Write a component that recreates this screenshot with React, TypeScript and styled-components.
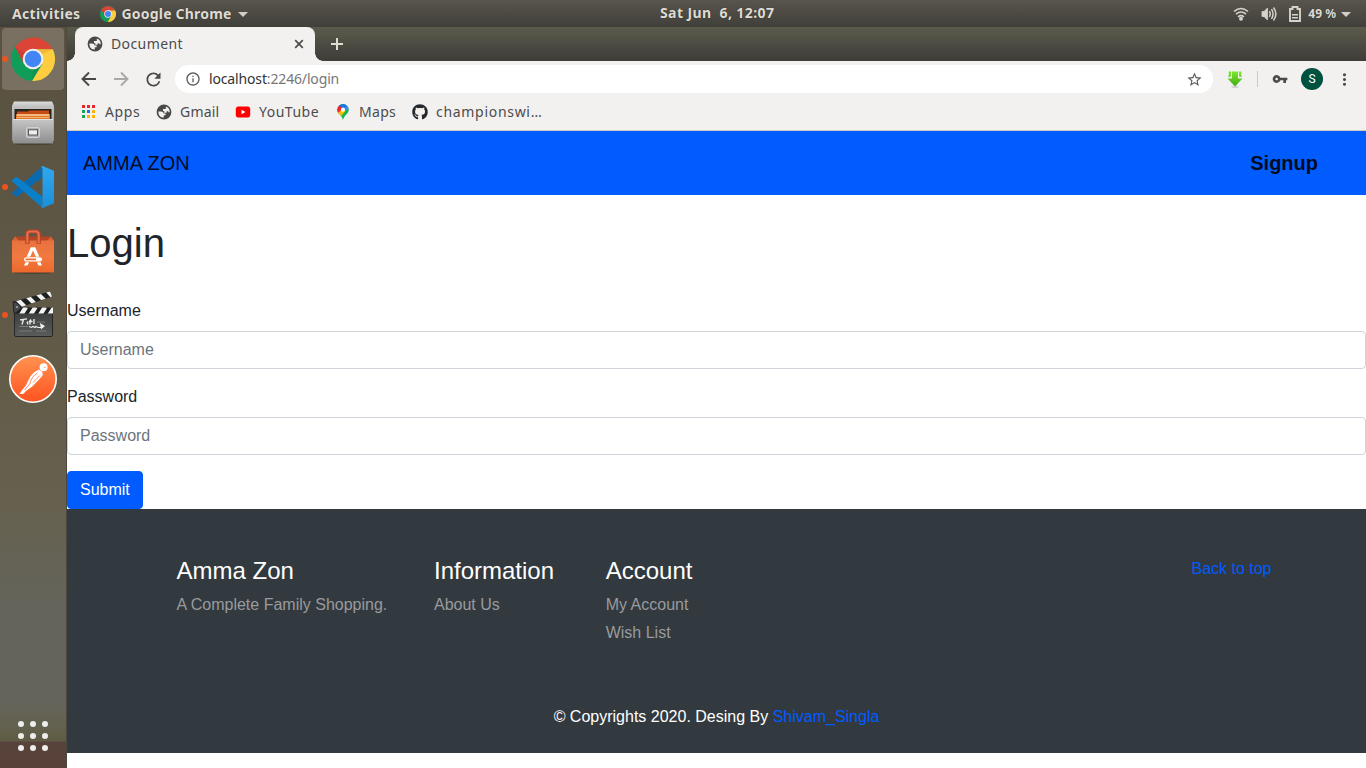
import React from "react";
import styled, { createGlobalStyle } from "styled-components";
import { MdRefresh, MdInfoOutline, MdStarBorder, MdVpnKey, MdMoreVert } from "react-icons/md";
import { FaGithub } from "react-icons/fa";

const Global = createGlobalStyle`
  * { box-sizing: border-box; }
  body { margin: 0; background: #fff; overflow: hidden; font-family: "Liberation Sans", Arial, sans-serif; }
`;

const Desktop = styled.div`
  width: 1366px;
  height: 768px;
  display: flex;
  flex-direction: column;
  overflow: hidden;
`;

const TopBar = styled.header`
  height: 27px;
  flex: none;
  display: grid;
  grid-template-columns: 648px 1fr 1fr;
  align-items: center;
  padding: 0 15px 0 12px;
  background: linear-gradient(#58554d, #413f3a);
  color: #dfdbd2;
  font: 700 14px "Noto Sans", "Open Sans", sans-serif;
  text-shadow: 0 0 1px #222;
`;

const BarGroup = styled.div<{ $end?: boolean }>`
  display: flex;
  align-items: center;
  justify-content: ${(p) => (p.$end ? "flex-end" : "flex-start")};
  svg { flex: none; }
`;

const BarText = styled.span<{ $size?: number; $spacing?: number; $left?: number }>`
  font-size: ${(p) => p.$size ?? 14}px;
  letter-spacing: ${(p) => p.$spacing ?? 0}px;
  margin-left: ${(p) => p.$left ?? 0}px;
  line-height: 26px;
  white-space: pre;
`;

const Clock = styled(BarText)`
  padding-bottom: 2px;
`;

const AppMenu = styled(BarGroup)`
  margin-left: 19px;
`;

const StatusIcons = styled(BarGroup)`
  gap: 12px;
  margin-right: 1px;
`;

const Caret = styled.i<{ $left: number }>`
  margin-left: ${(p) => p.$left}px;
  border: 5px solid transparent;
  border-top-color: #d3cfc6;
  border-bottom: 0;
`;

const Workspace = styled.div`
  flex: 1;
  min-height: 0;
  display: flex;
`;

const Dock = styled.nav`
  width: 67px;
  flex: none;
  display: flex;
  flex-direction: column;
  align-items: center;
  padding: 0 1px 17px 1px;
  border-right: 1px solid #4b493f;
  background: linear-gradient(#5a523f 0, #5c5443 120px, #625b48 340px, #66614f 480px, #64645a 570px, #64645a 680px, #62604b 705px, #5f5b44 714px, #57433b 715px, #594139 741px);
`;

const DockItem = styled.div<{ $active?: boolean; $running?: boolean }>`
  position: relative;
  width: 62px;
  height: ${(p) => (p.$active ? 62 : 64)}px;
  margin: ${(p) => (p.$active ? "1px 0" : "0")};
  display: flex;
  align-items: center;
  justify-content: center;
  border-radius: 4px;
  background: ${(p) => (p.$active ? "#797062" : "transparent")};
  &::before {
    content: "";
    display: ${(p) => (p.$running ? "block" : "none")};
    position: absolute;
    left: 0;
    top: 50%;
    width: 6px;
    height: 6px;
    margin-top: -3px;
    border-radius: 50%;
    background: #e95420;
  }
`;

const AppGrid = styled.div`
  margin-top: auto;
  display: grid;
  grid-template-columns: repeat(3, 6px);
  gap: 6px;
  i { width: 6px; height: 6px; border-radius: 50%; background: #eeeeec; }
`;

const Browser = styled.main`
  flex: 1;
  min-width: 0;
  display: flex;
  flex-direction: column;
  background: #fff;
`;

const TabStrip = styled.div`
  height: 34px;
  flex: none;
  display: flex;
  align-items: center;
  padding-left: 8px;
  background: linear-gradient(#5b5b4c, #3e3c38);
`;

const Tab = styled.div`
  position: relative;
  width: 240px;
  height: 34px;
  display: flex;
  align-items: center;
  padding: 0 9px 0 12px;
  border-radius: 8px 8px 0 0;
  background: #f2f1f0;
  color: #4c4c4c;
  margin-right: 13px;
  &::before, &::after {
    content: "";
    position: absolute;
    bottom: 0;
    width: 8px;
    height: 8px;
  }
  &::before { left: -8px; background: radial-gradient(circle at 0 0, transparent 7.5px, #f2f1f0 8px); }
  &::after { right: -8px; background: radial-gradient(circle at 100% 0, transparent 7.5px, #f2f1f0 8px); }
`;

const ChromeText = styled.span<{ $spacing?: number }>`
  font: 14px/20px "Noto Sans", "Open Sans", sans-serif;
  letter-spacing: ${(p) => p.$spacing ?? 0}px;
  color: #4c4c4c;
  white-space: nowrap;
`;

const TabTitle = styled(ChromeText)`
  margin-left: 8px;
  flex: 1;
`;

const Toolbar = styled.div`
  height: 36px;
  flex: none;
  display: flex;
  align-items: center;
  padding: 0 11px 0 12px;
  background: #f2f1f0;
  color: #4a4a4a;
`;

const NavIcons = styled.div`
  display: flex;
  gap: 12px;
  width: 96px;
  flex: none;
`;

const AddressBar = styled.div`
  flex: 1;
  height: 28px;
  display: flex;
  align-items: center;
  padding: 0 10px;
  border-radius: 14px;
  background: #fff;
  color: #5c5c5c;
`;

const Url = styled(ChromeText)`
  flex: 1;
  margin-left: 8px;
  color: #777;
  b { font-weight: 400; color: #333; }
`;

const Extensions = styled.div`
  display: flex;
  align-items: center;
  width: 142px;
  padding-left: 14px;
  svg { flex: none; }
`;

const Divider = styled.i`
  width: 1px;
  height: 16px;
  margin: 0 14px 0 14px;
  background: #cacac9;
`;

const Avatar = styled.span`
  width: 22px;
  height: 22px;
  flex: none;
  margin: 0 12px 0 13px;
  border-radius: 50%;
  background: #00513f;
  color: #fff;
  text-align: center;
  font: 12px/22px Roboto, sans-serif;
`;

const Bookmarks = styled.div`
  height: 34px;
  flex: none;
  display: flex;
  align-items: center;
  padding: 0 0 4px 14px;
  background: #f2f1f0;
  border-bottom: 1px solid #cfcac3;
`;

const Bookmark = styled.div<{ $width: number; $gap?: number }>`
  width: ${(p) => p.$width}px;
  display: flex;
  align-items: center;
  gap: ${(p) => p.$gap ?? 8}px;
  color: #4c4c4c;
  svg { flex: none; }
`;

const SiteNav = styled.nav`
  height: 64px;
  flex: none;
  display: flex;
  align-items: center;
  justify-content: space-between;
  padding: 0 48px 0 16px;
  background: #005cff;
  color: rgba(0, 0, 0, 0.9);
  font-size: 20px;
  line-height: 30px;
`;

const Form = styled.form`
  padding-top: 24px;
  color: #212529;
  font-size: 16px;
  line-height: 24px;
`;

const Heading = styled.h1`
  margin: 0 0 32px;
  font-size: 40px;
  font-weight: 400;
  line-height: 48px;
`;

const Field = styled.label`
  display: flex;
  flex-direction: column;
  gap: 8px;
  margin-bottom: 16px;
`;

const Input = styled.input`
  height: 38px;
  width: 100%;
  padding: 6px 12px;
  border: 1px solid #ced4da;
  border-radius: 4px;
  font: 16px/24px "Liberation Sans", Arial, sans-serif;
  &::placeholder { color: #6c757d; opacity: 1; }
`;

const Submit = styled.button`
  display: block;
  height: 38px;
  padding: 6px 12px;
  border: 1px solid #005cff;
  border-radius: 4px;
  background: #005cff;
  color: #fff;
  font: 16px/24px "Liberation Sans", Arial, sans-serif;
`;

const Footer = styled.footer`
  height: 244px;
  flex: none;
  display: flex;
  flex-direction: column;
  justify-content: space-between;
  padding: 48px 94.5px 24px 109.5px;
  background: #32393f;
  color: #fff;
  font-size: 16px;
  line-height: 24px;
`;

const FooterColumns = styled.div`
  display: grid;
  grid-template-columns: 257.5px 171.7px 1fr auto;
`;

const ColumnTitle = styled.h4`
  margin: 0 0 7px;
  font-size: 24px;
  font-weight: 400;
  line-height: 28.8px;
`;

const MutedLine = styled.div`
  margin-bottom: 4px;
  color: #999b9d;
`;

const Link = styled.a`
  color: #005cff;
`;

const Copyright = styled.p`
  margin: 0 -94.5px 0 -109.5px;
  text-align: center;
`;

function ChromeLogo({ size }: { size: number }) {
  return (
    <svg width={size} height={size} viewBox="0 0 44 44">
      <circle cx="22" cy="22" r="22" fill="#109d59" />
      <path d="M4 10A22 22 0 0 1 41.8 12.3H22L13 27Z" fill="#db4437" />
      <path d="M41.8 12.3A22 22 0 0 1 21 44L31 27 22 12.3Z" fill="#ffcd40" />
      <path d="M4 10L12.4 26 15 17Z" fill="#b63b2f" opacity=".5" />
      <path d="M22 12.3H41.8L32 17Z" fill="#e1a532" opacity=".5" />
      <path d="M21 44L31.5 27 22 33Z" fill="#128148" opacity=".4" />
      <circle cx="22" cy="22" r="10.3" fill="#f1f1f1" />
      <circle cx="22" cy="22" r="8.3" fill="#4285f4" />
    </svg>
  );
}

function GlobeIcon() {
  return (
    <svg width="16" height="16" viewBox="0 0 16 16">
      <circle cx="8" cy="8" r="7.4" fill="#484848" />
      <path d="M2.4 7.4H5.2Q7.6 7.5 7.8 9.5H9.6V11.2H7.8V13.5Q3.1 13.8 2.4 8.8Z" fill="#f2f1f0" />
      <path d="M9.8 2.6L12.2 3.8Q14 5.8 13.7 8.3H12.3V7.3H10.6V8.7H8.2V6.9H7V5H9.8Z" fill="#f2f1f0" />
    </svg>
  );
}

function FilesIcon() {
  return (
    <svg width="44" height="46" viewBox="0 0 44 46">
      <defs>
        <linearGradient id="metal" x2="0" y2="1"><stop stopColor="#c6c6c6" /><stop offset="1" stopColor="#8e8e8e" /></linearGradient>
        <linearGradient id="lid" x2="0" y2="1"><stop stopColor="#dedede" /><stop offset=".12" stopColor="#c2c2c2" /><stop offset="1" stopColor="#929292" /></linearGradient>
      </defs>
      <ellipse cx="22" cy="43.7" rx="20" ry="1.4" fill="#3c372c" opacity=".7" />
      <path d="M3 1.5H41L43 6V41H1V6Z" fill="url(#lid)" />
      <path d="M3.5 9H40.5V20H3.5Z" fill="#29231e" />
      <path d="M6 11.5H17L18 10.5H38V20H6Z" fill="#c64c12" />
      <path d="M5 14H39V20H5Z" fill="#e07b2e" />
      <path d="M6 15H38" stroke="#ffe2bc" strokeWidth="1.2" />
      <path d="M6 17.5H38" stroke="#f7b068" />
      <path d="M2 19H42V43.5H2Z" fill="url(#metal)" />
      <path d="M2 19.5H42" stroke="#e2e2e2" />
      <rect x="15.5" y="27.5" width="13" height="10" rx="1.5" fill="#b0b0b0" stroke="#d2d2d2" />
      <rect x="17.5" y="29.8" width="9" height="5.2" fill="#eee" stroke="#555" />
    </svg>
  );
}

function CodeIcon() {
  return (
    <svg width="44" height="44" viewBox="0 0 44 44">
      <defs><linearGradient id="wing" x2="0" y2="1"><stop stopColor="#2fa8ee" /><stop offset="1" stopColor="#1c8edb" /></linearGradient></defs>
      <path d="M1.2 27.4L31.5 1.2V12.3L6.6 31.4Q5.5 32 4.5 31.3L1.2 28.6Q.7 28 1.2 27.4Z" fill="#0a6ab0" />
      <path d="M1.2 15L4.5 12.3Q5.5 11.7 6.6 12.4L31.5 31.7V42.8L1.2 16.4Q.7 15.7 1.2 15Z" fill="#0b80ca" />
      <path d="M31.5 1L43 5.8V38.2L31.5 43Q30.4 42.7 30.2 41.7Q31.5 42 31.5 40V4Q31.5 2 30.2 2.3Q30.4 1.3 31.5 1Z" fill="url(#wing)" />
    </svg>
  );
}

function SoftwareIcon() {
  return (
    <svg width="44" height="46" viewBox="0 0 44 46">
      <defs><linearGradient id="bag" x2="0" y2="1"><stop stopColor="#e8713f" /><stop offset=".5" stopColor="#f07a40" /><stop offset="1" stopColor="#ee682c" /></linearGradient></defs>
      <ellipse cx="22" cy="44.6" rx="20" ry="1.3" fill="#35332a" opacity=".6" />
      <path d="M4 8.5H40L43 13H1Z" fill="#b64524" />
      <path d="M1 13L4 8.5 8 13ZM36 13L40 8.5 43 13Z" fill="#d86336" />
      <path d="M1 12.5H43V44.5H1Z" fill="url(#bag)" />
      <path d="M16.3 16V6.5Q16.3 3.5 19 3.5H25Q27.7 3.5 27.7 6.5V16" fill="none" stroke="#b94020" strokeWidth="4.2" />
      <path d="M16.3 15.5V6.5Q16.3 3.5 19 3.5H25Q27.7 3.5 27.7 6.5V15.5" fill="none" stroke="#e36f4c" strokeWidth="2.2" />
      <path d="M15.7 28.8L19.8 19.3H24.2L28.3 28.8H24.8L22 22.6 19.2 28.8Z" fill="#fff" />
      <rect x="13" y="29.3" width="18" height="4.2" rx="2.1" fill="#fff" />
      <path d="M14.5 31.4H25" stroke="#ed6b30" strokeWidth="1.7" />
      <path d="M14.5 34.2H18L16.6 37.6H13ZM26 34.2H29.5L31 37.6H27.4Z" fill="#fff" />
    </svg>
  );
}

function ClapperIcon() {
  return (
    <svg width="44" height="48" viewBox="0 0 44 48">
      <defs>
        <clipPath id="top-arm"><path d="M2 11L39 .5 41 5.5 7 17Z" /></clipPath>
        <clipPath id="low-arm"><path d="M3 16.5H42V22.5H3Z" /></clipPath>
        <linearGradient id="slate" x2="0" y2="1"><stop stopColor="#3d3e3e" /><stop offset="1" stopColor="#5a5b5b" /></linearGradient>
      </defs>
      <rect x="3.5" y="21.5" width="38" height="24" rx="1.5" fill="url(#slate)" stroke="#252626" />
      <g clipPath="url(#top-arm)">
        <path d="M0 0H44V20H0Z" fill="#1d1f20" />
        <path d="M5 7L14 16M14 3L24 13M24 0L34 10M34 -3L43 7" stroke="#f2f2f0" strokeWidth="4.2" />
      </g>
      <g clipPath="url(#low-arm)">
        <path d="M0 16H44V24H0Z" fill="#1d1f20" />
        <path d="M10 24L15 16M19.5 24L24.5 16M29 24L34 16M38.5 24L43.5 16" stroke="#f2f2f0" strokeWidth="4.4" />
      </g>
      <path d="M2 10.5Q6 10.5 10.5 17L4 22.5H3Z" fill="#45484a" stroke="#202223" />
      <circle cx="6" cy="16" r="1" fill="#aaa" />
      <path d="M9 28.8l7-1M12.5 28.5l-1.5 5M16 30.5l1 3M20 28.5l-1.5 2h3M19 30.5v3M23 28v5" stroke="#eee" strokeWidth="1.3" fill="none" />
      <path d="M18 35.5l2.5 1 1.5-1 2 1 1-1 2 1h5" stroke="#eee" strokeWidth="1.1" fill="none" />
      <path d="M29 32L34 35 30 38.5Z" fill="#eee" />
      <path d="M8 35.5H17M8 40H21M25 40H35M26 31H34" stroke="#8d8e8f" strokeWidth=".7" />
    </svg>
  );
}

function PostmanIcon() {
  return (
    <svg width="50" height="50" viewBox="0 0 50 50">
      <defs><linearGradient id="post" x2="0" y2="1"><stop stopColor="#ff9350" /><stop offset="1" stopColor="#ff5320" /></linearGradient></defs>
      <circle cx="25" cy="25" r="23.2" fill="url(#post)" stroke="#fff" strokeWidth="1.6" />
      <circle cx="35.6" cy="13.2" r="4" fill="#fff" />
      <path d="M35.5 13.8L38.5 12.8" stroke="#ffa06c" strokeWidth=".7" />
      <path d="M31 15.5Q35.6 17.5 34.6 21.5L31.5 25 24 32.8 18 37 15.5 39.8 11.5 40 14.5 35.5 18.2 31 20 27Q23 19 31 15.5Z" fill="#fff" />
      <path d="M29.5 19Q23.5 22.5 22 29.5L16.5 36M31.8 21.5L25 28.5" stroke="#ff7038" fill="none" strokeWidth=".8" />
    </svg>
  );
}

const WifiIcon = () => (
  <svg width="16" height="16" viewBox="0 0 16 16" fill="none" stroke="#d6d2ca" strokeWidth="1.6">
    <path d="M1 5.5Q8 -.5 15 5.5M3 8.2Q8 3.8 13 8.2M5 10.8Q8 8.5 11 10.8" />
    <circle cx="8" cy="12.7" r="2" fill="#d6d2ca" stroke="none" />
  </svg>
);

const SoundIcon = () => (
  <svg width="16" height="16" viewBox="0 0 16 16" fill="none" stroke="#d6d2ca" strokeWidth="1.5">
    <path d="M1 5.5H3L6.5 2V14L3 10.5H1Z" fill="#d6d2ca" strokeWidth=".8" />
    <path d="M8.3 5.2Q10.2 8 8.3 10.8M10.5 3.2Q13.6 8 10.5 12.8M12.5 1.5Q17.3 8 12.5 14.5" />
  </svg>
);

const BatteryIcon = () => (
  <svg width="12" height="16" viewBox="0 0 12 16">
    <path d="M1 3H3.5V1H8.5V3H11V15H1Z" fill="none" stroke="#d6d2ca" strokeWidth="1.9" />
    <path d="M3 8.8H9M3 11.8H9" stroke="#d6d2ca" strokeWidth="1.5" />
  </svg>
);

const CloseIcon = () => (
  <svg width="14" height="14" viewBox="0 0 14 14" stroke="#4c4c4c" strokeWidth="1.7">
    <path d="M3.2 3.2L10.8 10.8M10.8 3.2L3.2 10.8" />
  </svg>
);

const PlusIcon = () => (
  <svg width="18" height="18" viewBox="0 0 18 18" stroke="#deddd2" strokeWidth="2">
    <path d="M9 3V15M3 9H15" />
  </svg>
);

const ArrowIcon = ({ forward }: { forward?: boolean }) => (
  <svg width="20" height="20" viewBox="0 0 20 20" fill="none" stroke={forward ? "#a8a8a7" : "#484848"} strokeWidth="1.9">
    <path d={forward ? "M3 10H16M10 3.5L16.5 10 10 16.5" : "M17 10H4M10 3.5L3.5 10 10 16.5"} />
  </svg>
);

const DownloadIcon = () => (
  <svg width="16" height="17" viewBox="0 0 16 17">
    <defs><linearGradient id="down" x2="0" y2="1"><stop stopColor="#7bea2b" /><stop offset="1" stopColor="#41aa16" /></linearGradient></defs>
    <ellipse cx="8" cy="16" rx="4" ry=".7" fill="#c9c9c9" />
    <path d="M5 .5H11V7.5H15.5L8 15.5 .5 7.5H5ZM1.5 .5H4V5.5L1 6 2 3.5ZM14.5 .5H12V5.5L15 6 14 3.5Z" fill="url(#down)" />
  </svg>
);

const AppsIcon = () => (
  <svg width="15" height="15" viewBox="0 0 15 15">
    {["#e8252b", "#e8252b", "#e8252b", "#17a45a", "#1675e8", "#fbb300", "#17a45a", "#fbb300", "#fbb300"].map((c, i) => (
      <rect key={i} x={1 + (i % 3) * 5} y={1 + Math.floor(i / 3) * 5} width="3" height="3" fill={c} />
    ))}
  </svg>
);

const YouTubeIcon = () => (
  <svg width="16" height="16" viewBox="0 0 16 16">
    <rect x=".8" y="2.5" width="14.4" height="11" rx="2.5" fill="#f00" />
    <path d="M6.5 5.7V10.3L10.5 8Z" fill="#fff" />
  </svg>
);

const MapsIcon = () => (
  <svg width="16" height="16" viewBox="0 0 16 16">
    <defs><clipPath id="pin"><path d="M8 0A5.7 5.7 0 0 0 2.3 5.7C2.3 10 6.8 10.5 8 16C9.2 10.5 13.7 10 13.7 5.7A5.7 5.7 0 0 0 8 0Z" /></clipPath></defs>
    <g clipPath="url(#pin)">
      <path d="M0 0H16V16H0Z" fill="#12b650" />
      <path d="M2 0H14L8 6Z" fill="#1a73e8" />
      <path d="M8 6L13 0 16 4 11 6Z" fill="#4285f4" />
      <path d="M0 0H3L8 5 2 10H0Z" fill="#f4252b" />
      <path d="M7.5 5L1 10.5 5 13.5 10.5 7Z" fill="#fbbc04" />
      <circle cx="8" cy="5.7" r="2.1" fill="#fff" />
    </g>
  </svg>
);

export default function App() {
  return (
    <Desktop>
      <Global />
      <TopBar>
        <BarGroup>
          <BarText $spacing={0.35}>Activities</BarText>
          <AppMenu>
            <ChromeLogo size={16} />
            <BarText $spacing={0.2} $left={6}>Google Chrome</BarText>
            <Caret $left={6} />
          </AppMenu>
        </BarGroup>
        <Clock $spacing={0.4}>Sat Jun  6, 12:07</Clock>
        <BarGroup $end>
          <StatusIcons><WifiIcon /><SoundIcon /><BatteryIcon /></StatusIcons>
          <BarText $size={12} $left={6}>49 %</BarText>
          <Caret $left={5} />
        </BarGroup>
      </TopBar>
      <Workspace>
        <Dock>
          <DockItem $active $running><ChromeLogo size={44} /></DockItem>
          <DockItem><FilesIcon /></DockItem>
          <DockItem $running><CodeIcon /></DockItem>
          <DockItem><SoftwareIcon /></DockItem>
          <DockItem $running><ClapperIcon /></DockItem>
          <DockItem><PostmanIcon /></DockItem>
          <AppGrid>{Array.from({ length: 9 }, (_, i) => <i key={i} />)}</AppGrid>
        </Dock>
        <Browser>
          <TabStrip>
            <Tab>
              <GlobeIcon />
              <TabTitle $spacing={0.4}>Document</TabTitle>
              <CloseIcon />
            </Tab>
            <PlusIcon />
          </TabStrip>
          <Toolbar>
            <NavIcons>
              <ArrowIcon />
              <ArrowIcon forward />
              <MdRefresh size={21} />
            </NavIcons>
            <AddressBar>
              <MdInfoOutline size={16} />
              <Url $spacing={-0.15}><b>localhost</b>:2246/login</Url>
              <MdStarBorder size={17} />
            </AddressBar>
            <Extensions>
              <DownloadIcon />
              <Divider />
              <MdVpnKey size={16} />
              <Avatar>S</Avatar>
              <MdMoreVert size={19} />
            </Extensions>
          </Toolbar>
          <Bookmarks>
            <Bookmark $width={75} $gap={9}><AppsIcon /><ChromeText $spacing={0.6}>Apps</ChromeText></Bookmark>
            <Bookmark $width={79}><GlobeIcon /><ChromeText $spacing={0.2}>Gmail</ChromeText></Bookmark>
            <Bookmark $width={100}><YouTubeIcon /><ChromeText $spacing={0.5}>YouTube</ChromeText></Bookmark>
            <Bookmark $width={77}><MapsIcon /><ChromeText $spacing={0.3}>Maps</ChromeText></Bookmark>
            <Bookmark $width={140}><FaGithub size={16} color="#24292e" /><ChromeText $spacing={0.7}>championswi…</ChromeText></Bookmark>
          </Bookmarks>
          <SiteNav><span>AMMA ZON</span><strong>Signup</strong></SiteNav>
          <Form>
            <Heading>Login</Heading>
            <Field>Username<Input placeholder="Username" /></Field>
            <Field>Password<Input type="password" placeholder="Password" /></Field>
            <Submit type="button">Submit</Submit>
          </Form>
          <Footer>
            <FooterColumns>
              <div><ColumnTitle>Amma Zon</ColumnTitle><MutedLine>A Complete Family Shopping.</MutedLine></div>
              <div><ColumnTitle>Information</ColumnTitle><MutedLine>About Us</MutedLine></div>
              <div><ColumnTitle>Account</ColumnTitle><MutedLine>My Account</MutedLine><MutedLine>Wish List</MutedLine></div>
              <Link>Back to top</Link>
            </FooterColumns>
            <Copyright>© Copyrights 2020. Desing By <Link>Shivam_Singla</Link></Copyright>
          </Footer>
        </Browser>
      </Workspace>
    </Desktop>
  );
}
